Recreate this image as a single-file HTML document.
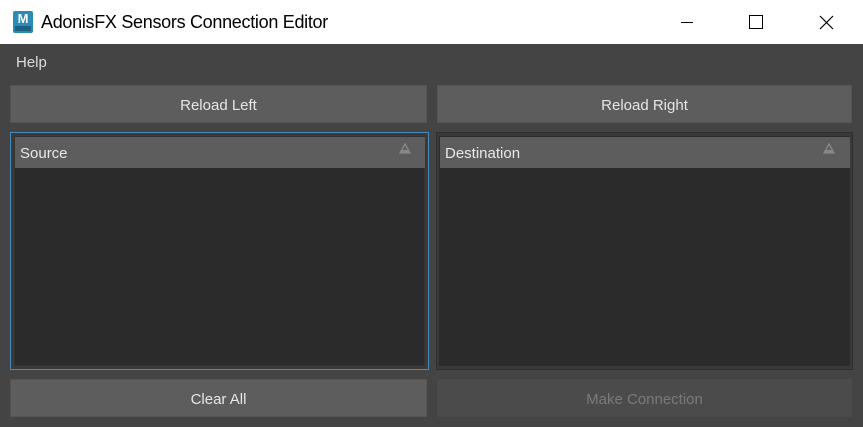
<!DOCTYPE html><html><head><style>
body{margin:0;width:863px;height:427px;background:#444;font-family:"Liberation Sans",sans-serif;position:relative;overflow:hidden}
.a{position:absolute;box-sizing:border-box}
.btn{background:#5d5d5d;color:#e6e6e6;font-size:15px;display:flex;align-items:center;justify-content:center;border:1px solid #555;padding-top:3px}
.hdr{background:#5d5d5d;color:#e8e8e8;font-size:15px;line-height:34px;padding-left:5px}
</style></head><body>
<div class="a" style="left:0;top:0;width:863px;height:44px;background:#fff"></div>
<div class="a" style="left:13px;top:11px;width:20px;height:22px;background:#2a8ab8;border-radius:2px;color:#fff;font-weight:bold;font-size:13px;text-align:center;line-height:15px">M<div style="position:absolute;left:2px;bottom:2px;width:16px;height:5px;background:#1f5f80"></div></div>
<div class="a" style="left:41px;top:12px;font-size:18px;color:#000;letter-spacing:-0.3px">AdonisFX Sensors Connection Editor</div>
<div class="a" style="left:681px;top:22px;width:12px;height:1px;background:#000"></div>
<div class="a" style="left:749px;top:15px;width:14px;height:14px;border:1px solid #000"></div>
<svg class="a" style="left:819px;top:15px" width="15" height="15"><path d="M1 1L14 14M14 1L1 14" stroke="#000" stroke-width="1.2"/></svg>
<div class="a" style="left:16px;top:54px;font-size:15px;color:#ddd">Help</div>
<div class="a btn" style="left:10px;top:85px;width:417px;height:38px">Reload Left</div>
<div class="a btn" style="left:437px;top:85px;width:415px;height:38px">Reload Right</div>
<div class="a" style="left:10px;top:132px;width:419px;height:238px;border:1px solid #4b8ab8;background:#3a3a3a"></div>
<div class="a" style="left:14px;top:136px;width:411px;height:230px;background:#2b2b2b;border:1px solid #333"></div>
<div class="a hdr" style="left:15px;top:137px;width:410px;height:31px">Source</div>
<div class="a" style="left:436px;top:132px;width:417px;height:238px;border:1px solid #2e2e2e;background:#3a3a3a"></div>
<div class="a" style="left:439px;top:136px;width:411px;height:230px;background:#2b2b2b"></div>
<div class="a hdr" style="left:440px;top:137px;width:410px;height:31px">Destination</div>
<svg class="a" style="left:398px;top:143px" width="14" height="12"><path d="M7 1L12 10H2Z" fill="none" stroke="#888" stroke-width="1.3"/><rect x="3" y="7" width="8" height="3" fill="#888"/></svg>
<svg class="a" style="left:822px;top:143px" width="14" height="12"><path d="M7 1L12 10H2Z" fill="none" stroke="#888" stroke-width="1.3"/><rect x="3" y="7" width="8" height="3" fill="#888"/></svg>
<div class="a btn" style="left:10px;top:379px;width:417px;height:38px">Clear All</div>
<div class="a btn" style="left:437px;top:379px;width:415px;height:38px;background:#4b4b4b;color:#7a7a7a;border-color:#4a4a4a">Make Connection</div>
</body></html>
